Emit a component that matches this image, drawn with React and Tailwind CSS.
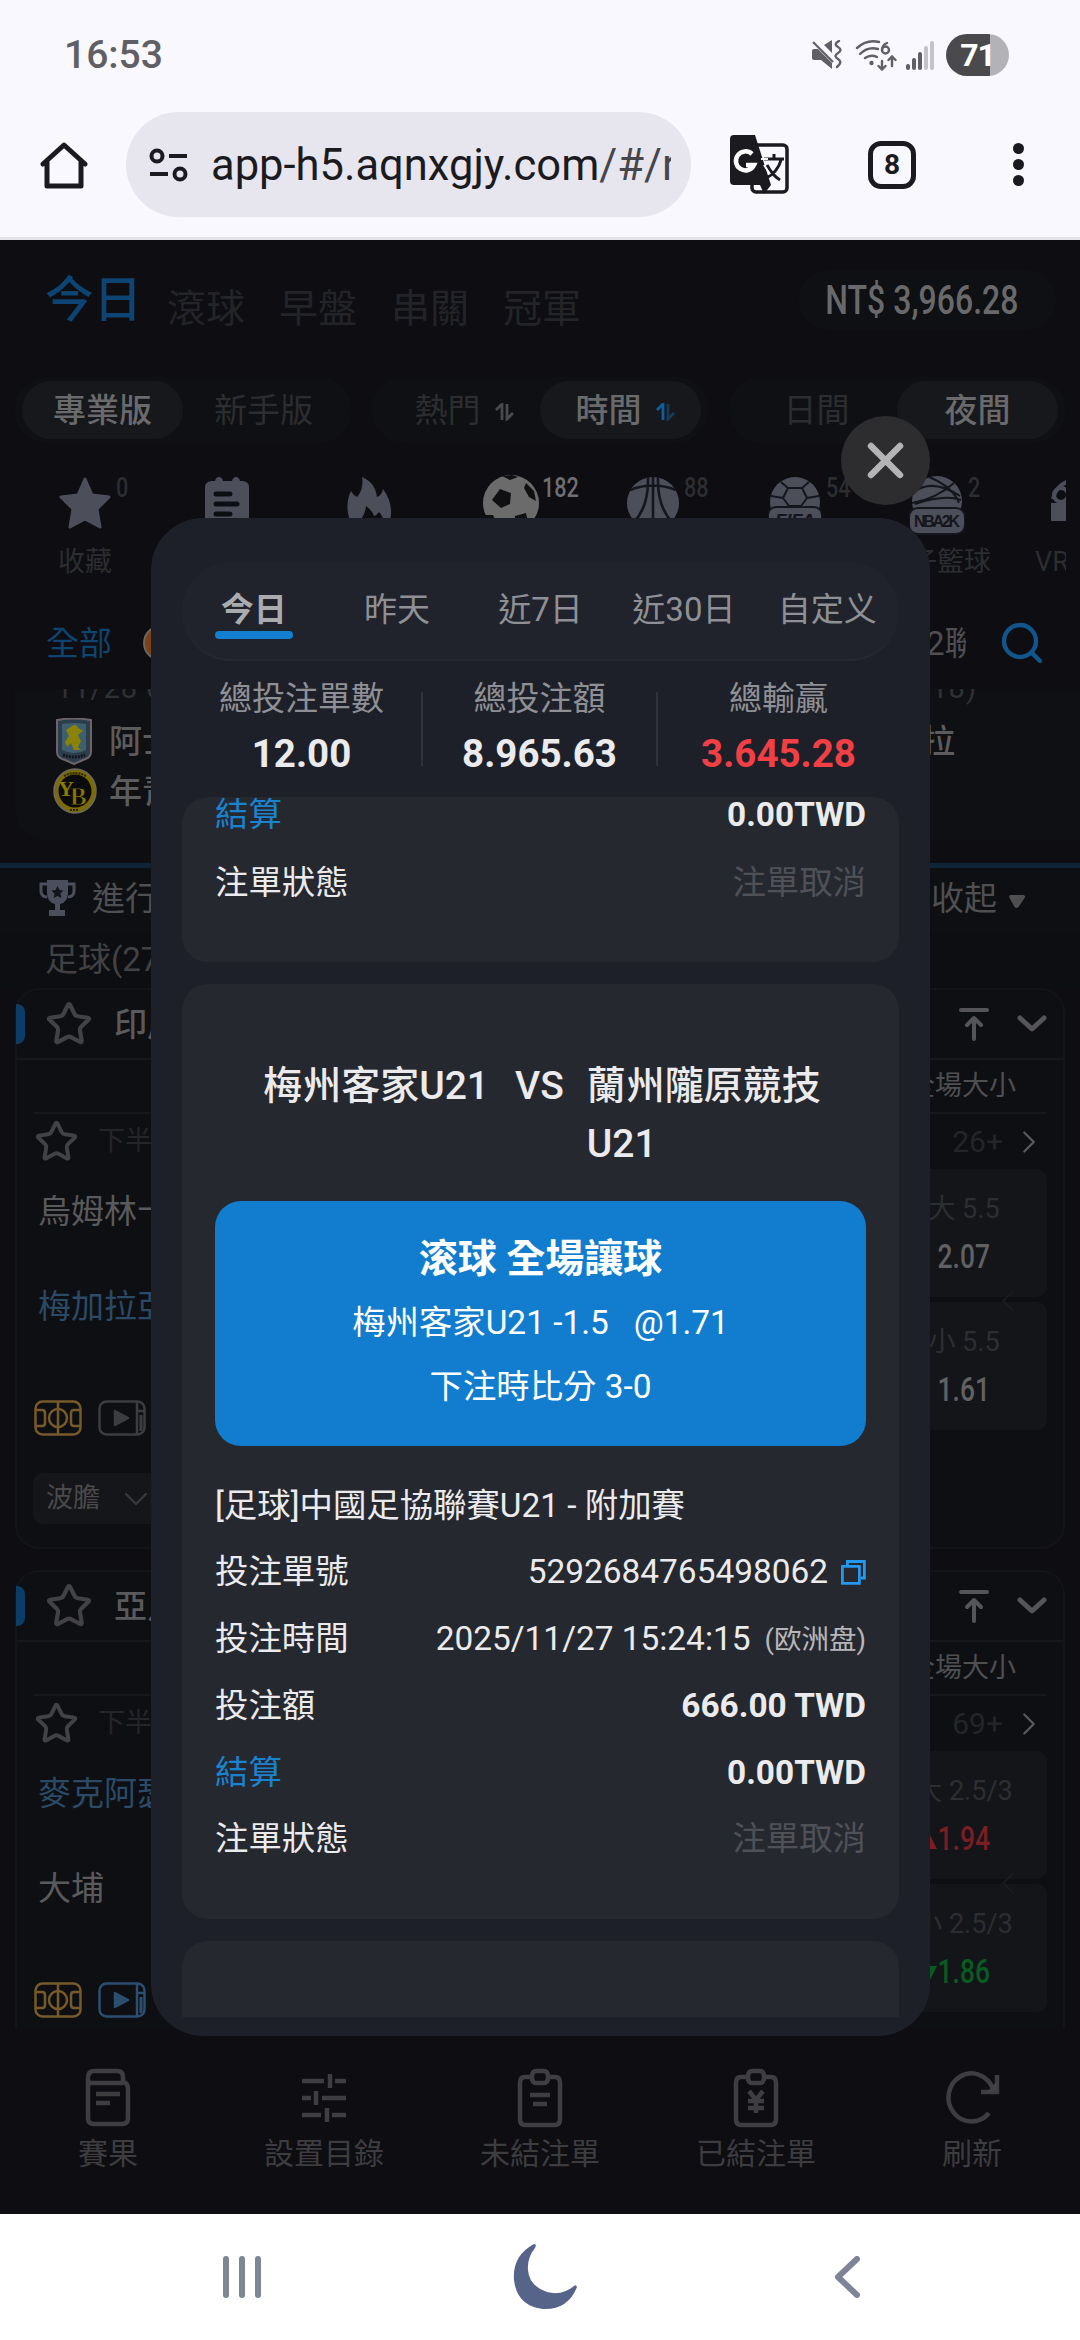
import { Search, Star, ChevronRight, ChevronDown, ChevronLeft } from 'lucide-react';

const FONT = 'font-[Roboto,"Noto_Sans_CJK_TC",sans-serif]';

const records = [
  { label: '投注單號', value: '5292684765498062', kind: 'copy' },
  { label: '投注時間', value: '2025/11/27 15:24:15', kind: 'time' },
  { label: '投注額', value: '666.00 TWD', kind: 'bold' },
  { label: '結算', value: '0.00TWD', kind: 'settle' },
  { label: '注單狀態', value: '注單取消', kind: 'status' },
];

const leagues = [
  {
    name: '印尼',
    more: '26+',
    home: '烏姆林十',
    away: '梅加拉亞',
    homeBlue: false,
    videoOn: false,
    odds: [
      { label: '大 5.5', value: '2.07', trend: '' },
      { label: '小 5.5', value: '1.61', trend: '' },
    ],
  },
  {
    name: '亞足',
    more: '69+',
    home: '麥克阿瑟',
    away: '大埔',
    homeBlue: true,
    videoOn: true,
    odds: [
      { label: '大 2.5/3', value: '1.94', trend: 'up' },
      { label: '小 2.5/3', value: '1.86', trend: 'down' },
    ],
  },
];

function StatusBar() {
  return (
    <div className="flex h-[110px] items-center justify-between pl-[64px] pr-[71px]">
      <span className="text-[39px] leading-none font-medium text-[#606064]">16:53</span>
      <div className="flex items-center">
        <svg width="32" height="30" viewBox="0 0 32 30" fill="#606064">
          <path d="M1 11q0-2 2-2h4l14 14v6l-11-9H3q-2 0-2-2zM13 5l8-5v13z" />
          <path d="M2 2l20 20" stroke="#606064" strokeWidth="2.2" />
          <path
            d="M28 1q-6 3-1 6t0 6q-5 3 0 6t-1 8"
            fill="none"
            stroke="#606064"
            strokeWidth="2.4"
            strokeLinecap="round"
          />
        </svg>
        <svg className="ml-[12px]" width="42" height="31" viewBox="0 0 42 31" fill="none" stroke="#606064" strokeWidth="2.4" strokeLinecap="round">
          <path d="M2 8Q12-1 24 2M5 14Q13 6 23 9M10 18q6-4 12-1" />
          <circle cx="16.500" cy="23" r="1" fill="#606064" />
          <path d="M32 3q-5 2-5 7" />
          <circle cx="30.500" cy="10" r="3.500" />
          <path d="M27 21v8M23.500 26l3.500 3.500 3.500-3.500M37 26v-9M33.500 20l3.500-3.500 3.500 3.500" />
        </svg>
        <div className="ml-[9px] flex h-[29px] items-end gap-[2px]">
          <i className="h-[6px] w-[4px] rounded-full bg-[#606064]" />
          <i className="h-[12px] w-[4px] rounded-full bg-[#606064]" />
          <i className="h-[18px] w-[4px] rounded-full bg-[#606064]" />
          <i className="h-[24px] w-[4px] rounded-full bg-[#c4c3c8]" />
          <i className="h-[29px] w-[4px] rounded-full bg-[#c4c3c8]" />
        </div>
        <div className="ml-[12px] flex h-[42px] w-[63px] items-center justify-center rounded-full bg-[linear-gradient(90deg,#4a4a4d_70%,#b3b2b7_70%)]">
          <span className="text-[32px] leading-none font-bold tracking-[-1px] text-white">71</span>
        </div>
      </div>
    </div>
  );
}

function AddressBar() {
  return (
    <div className="flex h-[109px] items-center">
      <svg className="ml-[40px]" width="48" height="48" viewBox="0 0 48 48" fill="none" stroke="#1b1b1f" strokeWidth="5" strokeLinejoin="round" strokeLinecap="round">
        <path d="M3 23L24 4l21 19M7 21v24h34V21" />
      </svg>
      <div className="ml-[38px] flex h-[105px] w-[565px] items-center rounded-full bg-[#e7e6ee]">
        <svg className="ml-[23px] shrink-0" width="40" height="34" viewBox="0 0 40 34" fill="none" stroke="#1b1b1f" strokeWidth="4">
          <circle cx="8" cy="8" r="5.500" />
          <path d="M20 8h18M1 26h18" />
          <circle cx="31" cy="26" r="5.500" />
        </svg>
        <div className="ml-[22px] w-[460px] overflow-hidden pt-[2px] text-[43.500px] leading-[60px] whitespace-nowrap text-[#1b1b1f]">
          app-h5.aqnxgjy.com<span className="text-[#47464b]">/#/r</span>
        </div>
      </div>
      <svg className="ml-[39px]" width="60" height="60" viewBox="0 0 60 60">
        <rect x="22" y="10" width="35" height="47" rx="4" fill="#f9f8ff" stroke="#1b1b1f" strokeWidth="3.500" />
        <path d="M34 24h20M44 19v5M51 25q-3 12-16 19M37 30q5 10 13 15" stroke="#1b1b1f" strokeWidth="3" fill="none" />
        <path d="M4 0h21l16 50-7 9-4-9H4q-4 0-4-4V4q0-4 4-4z" fill="#1b1b1f" />
        <path d="M22 19a9.500 9.500 0 1 0 2 11h-8" fill="none" stroke="#fff" strokeWidth="4.500" />
        <path d="M31 24h7M34 30l6 9" stroke="#f9f8ff" strokeWidth="2" />
      </svg>
      <div className="ml-[78px] flex h-[48px] w-[48px] items-center justify-center rounded-[13px] border-[5px] border-[#1b1b1f] text-[28px] leading-none font-bold text-[#1b1b1f]">
        8
      </div>
      <div className="ml-[97px] flex flex-col gap-[5px]">
        <i className="size-[11px] rounded-full bg-[#1b1b1f]" />
        <i className="size-[11px] rounded-full bg-[#1b1b1f]" />
        <i className="size-[11px] rounded-full bg-[#1b1b1f]" />
      </div>
    </div>
  );
}

function SwapIcon({ up, down }) {
  return (
    <svg className="mt-[4px]" width="20" height="18" viewBox="0 0 20 18" fill="none" strokeWidth="2.800">
      <path d="M1 7l6-6v16" stroke={up} />
      <path d="M12 1v15l6-6" stroke={down} />
    </svg>
  );
}

function Toggle({ left, right, rightOn, icons }) {
  const on = 'flex h-[58px] w-[161px] items-center justify-center gap-[14px] rounded-full bg-[#17181b] font-medium text-[#6a6a6c]';
  const off = 'flex h-[58px] w-[161px] items-center justify-center gap-[14px] text-[#2c2d30]';
  const shift = icons ? ' pl-[10px]' : '';
  return (
    <div className="flex h-[66px] items-center rounded-full bg-[#0f1013] px-[8px] text-[33px] leading-none">
      <div className={(rightOn ? off : on) + shift}>
        {left}
        {icons && <SwapIcon up="#4a4a4c" down="#4a4a4c" />}
      </div>
      <div className={(rightOn ? on : off) + shift}>
        {right}
        {icons && <SwapIcon up="#0f5f9e" down="#163a58" />}
      </div>
    </div>
  );
}

function Sport({ icon, count, label, bright }) {
  return (
    <div className="relative flex w-[142px] shrink-0 flex-col items-center">
      <div className="flex h-[64px] items-start justify-center">{icon}</div>
      <span
        className={
          'absolute top-[-2px] left-[102px] origin-left scale-x-[0.8] text-[27px] leading-none font-medium ' +
          (bright ? 'text-[#6f6f71]' : 'text-[#2c2d31]')
        }
      >
        {count}
      </span>
      <span className="mt-[8px] text-[27px] leading-none whitespace-nowrap text-[#2c2d30]">{label}</span>
    </div>
  );
}

function SportRow() {
  return (
    <div className="h-[130px] w-[1066px] overflow-hidden pt-[17px]">
      <div className="flex pl-[14px]">
        <Sport
          count="0"
          label="收藏"
          icon={
            <svg width="52" height="52" viewBox="0 0 52 52" fill="#4c4e5a" stroke="#4c4e5a" strokeWidth="3" strokeLinejoin="round">
              <path d="M26 2l7 16 17 2-12 12 3 18-15-8-15 8 3-18L2 20l17-2z" />
            </svg>
          }
        />
        <Sport
          count=""
          label="賽事"
          icon={
            <svg width="44" height="52" viewBox="0 0 44 52">
              <path d="M6 4h4q1-4 4-4t4 4h9q1-4 4-4t4 4h3q6 1 6 6v42H0V10q0-5 6-6z" fill="#4c4e5a" />
              <path d="M11 17h14M11 27h21M11 37h14" stroke="#0d0e13" strokeWidth="5" strokeLinecap="round" />
            </svg>
          }
        />
        <Sport
          count=""
          label="熱門"
          icon={
            <svg width="46" height="52" viewBox="0 0 46 52" fill="#4c4e5a">
              <path d="M16 0q13 5 15 20 5-2 6-8 9 12 8 26-1 8-6 12-1-10-6-15-2 3-5 4-2-6-8-10-1 9-6 14-2 3-3 7-8-5-9-14-2-12 3-22 2 4 6 6 7-8 5-20z" />
            </svg>
          }
        />
        <Sport
          count="182"
          label="足球"
          bright
          icon={
            <svg width="58" height="58" viewBox="0 0 58 58" className="-mt-[2px]">
              <circle cx="29" cy="28" r="28" fill="#6c6b6c" />
              <path
                d="M18 14l11 4-1 11-9 4-9-8zM44 8l8 8 2 10-7-4-5-9zM33 41l11-3 2 9-6 8-8-4zM3 40l8 0 5 12-8-3zM20 1l10-1 6 2-8 3z"
                fill="#101013"
              />
            </svg>
          }
        />
        <Sport
          count="88"
          label="籃球"
          icon={
            <svg width="52" height="52" viewBox="0 0 52 52" fill="none" stroke="#15161d" strokeWidth="2.600">
              <circle cx="26" cy="26" r="26" fill="#4c4e5a" stroke="none" />
              <path d="M26 0v52M3 13q23-9 46 0M6 46Q22 30 21 0M46 46Q30 30 31 0" />
            </svg>
          }
        />
        <Sport
          count="54"
          label="電子足球"
          icon={
            <svg width="54" height="56" viewBox="0 0 54 56" fill="none" stroke="#15161d" strokeWidth="2">
              <circle cx="27" cy="25" r="25" fill="#4c4e5a" stroke="none" />
              <path d="M20 11h14l5 10-6 8H21l-6-8zM20 11l-7-6M34 11l7-6M39 21l12-2M15 21L3 19M33 29l3 8M21 29l-3 8" />
              <rect x="0" y="30" width="54" height="26" rx="8" fill="#4c4e5a" />
              <text x="27" y="50" textAnchor="middle" fill="#15161d" stroke="none" fontSize="19" fontWeight="900" fontStyle="italic" textLength="40" fontFamily="Liberation Sans">
                FIFA
              </text>
            </svg>
          }
        />
        <Sport
          count="2"
          label="電子籃球"
          icon={
            <svg width="56" height="60" viewBox="0 0 56 60" fill="none" stroke="#15161d" strokeWidth="2" className="-mt-[2px]">
              <circle cx="28" cy="26" r="25" fill="#4c4e5a" stroke="none" />
              <path d="M5 17q18-14 46 4M3 28q24-4 42-20M20 2q24 10 30 26M6 29q30-10 46-4" />
              <rect x="0" y="33" width="56" height="26" rx="9" fill="#4c4e5a" />
              <text x="28" y="52" textAnchor="middle" fill="#15161d" stroke="none" fontSize="16" fontWeight="900" textLength="46" fontFamily="Liberation Sans">
                NBA2K
              </text>
            </svg>
          }
        />
        <Sport
          count=""
          label="VR足球"
          icon={
            <svg width="56" height="46" viewBox="0 0 56 46" fill="none" stroke="#4c4e5a" strokeWidth="4">
              <path d="M2 22Q6 4 28 2t26 20" />
              <circle cx="10" cy="18" r="7" />
              <path d="M2 28h52v14H2z" fill="#4c4e5a" />
            </svg>
          }
        />
      </div>
    </div>
  );
}

function AstonCrest() {
  return (
    <svg width="38" height="47" viewBox="0 0 38 47">
      <path d="M2 2q17-3 34 0v32q0 6-8 8l-9 4-9-4q-8-2-8-8z" fill="#2c3d4c" stroke="#6d6469" strokeWidth="2" />
      <path d="M7 6q12-2 24 0v26q-12 6-24 0z" fill="#3f5f6e" />
      <path d="M17 8q5-3 6 2l5 3-5 4 3 6-3 6 3 3h-7l-3-7-4 4-2-5 4-6-3-6z" fill="#8a8308" />
      <path d="M8 37q11 4 22 0" stroke="#11161d" strokeWidth="3" strokeDasharray="2 1" fill="none" />
    </svg>
  );
}

function YoungBoysCrest() {
  return (
    <svg width="44" height="46" viewBox="0 0 44 46">
      <ellipse cx="22" cy="23" rx="21" ry="22" fill="#7b6a06" stroke="#6c6a60" strokeWidth="1.500" />
      <circle cx="22" cy="23" r="16.500" fill="#0b0b0c" />
      <path d="M11 8q11-6 22 0M17 42h9" stroke="#2e2803" strokeWidth="2" strokeDasharray="2 1" fill="none" />
      <text x="5" y="28" fontSize="22" fontWeight="700" fill="#8a7808" fontFamily="Liberation Serif">Y</text>
      <text x="17" y="37" fontSize="25" fontWeight="700" fill="#8a7808" stroke="#0b0b0c" strokeWidth="0.8" fontFamily="Liberation Serif">B</text>
    </svg>
  );
}

function TrophyIcon() {
  return (
    <svg width="37" height="37" viewBox="0 0 37 37">
      <path d="M8 0h21v13q0 9-8 11v6h5v6H10v-6h6v-6q-8-2-8-11z" fill="#4b4e5d" />
      <path d="M8 4H2v8q1 5 6 5M29 4h6v8q-1 5-6 5" fill="none" stroke="#4b4e5d" strokeWidth="3" />
      <path d="M18.500 6l2 4 4 .5-3 3 .8 4.500-3.800-2-3.800 2 .8-4.500-3-3 4-.5z" fill="#14151b" />
    </svg>
  );
}

function PitchIcon() {
  return (
    <svg width="48" height="36" viewBox="0 0 48 36" fill="none" stroke="#775a2b" strokeWidth="2.500">
      <rect x="1.500" y="1.500" width="45" height="33" rx="7" />
      <path d="M24 2v32M2 10h6q3 0 3 3v10q0 3-3 3H2M46 10h-6q-3 0-3 3v10q0 3 3 3h6" />
      <circle cx="24" cy="18" r="9" />
    </svg>
  );
}

function VideoIcon({ color }) {
  return (
    <svg width="48" height="36" viewBox="0 0 48 36" fill="none" stroke={color} strokeWidth="2.500">
      <rect x="1.500" y="1.500" width="45" height="33" rx="7" />
      <path d="M39 2v32M39 11h8" />
      <path d="M43 15v16" strokeWidth="3" />
      <path d="M17 11l13 7-13 7z" fill={color} strokeLinejoin="round" />
    </svg>
  );
}

function OddValue({ value, trend }) {
  const color = trend === 'up' ? 'text-[#7a1e24]' : trend === 'down' ? 'text-[#0b5a22]' : 'text-[#616163]';
  return (
    <span className={'relative mt-[17px] text-[33px] font-medium ' + color}>
      {trend && (
        <svg className="absolute top-[11px] left-[-10px]" width="16" height="16" viewBox="0 0 16 16" fill="currentColor">
          <path d={trend === 'up' ? 'M8 0l8 16H0z' : 'M8 16L0 0h16z'} />
        </svg>
      )}
      <span className="inline-block scale-x-[0.8]">{value}</span>
    </span>
  );
}

function LeagueCard({ league }) {
  return (
    <div className="mx-[15px] h-[561px] shrink-0 rounded-[24px] border-2 border-[#131417] bg-[#0e0f12] leading-none">
      <div className="flex h-[70px] items-center border-b-2 border-[#17181b]">
        <i className="-ml-[1px] h-[40px] w-[9px] rounded-r-[8px] bg-[#0c3d66]" />
        <Star className="ml-[20px]" size={48} strokeWidth={2.1} color="#424245" />
        <span className="ml-[21px] text-[33px] font-medium text-[#5a5a5c]">{league.name}</span>
        <svg className="ml-auto" width="30" height="33" viewBox="0 0 30 33" fill="none" stroke="#545459" strokeWidth="4" strokeLinecap="round" strokeLinejoin="round">
          <path d="M2 2h26M15 31V11M8 17l7-7 7 7" />
        </svg>
        <svg className="mr-[16px] ml-[28px]" width="30" height="20" viewBox="0 0 30 20" fill="none" stroke="#545459" strokeWidth="5" strokeLinecap="round" strokeLinejoin="round">
          <path d="M3 4l12 11L27 4" />
        </svg>
      </div>
      <div className="mr-[17px] ml-[17px] flex h-[54px] items-center justify-end border-b-2 border-[#17181b] pr-[30px] text-[27px] text-[#4f4f52]">
        全場大小
      </div>
      <div className="flex h-[55px] items-center pl-[17px]">
        <Star size={45} strokeWidth={2.1} color="#424245" />
        <span className="ml-[19px] text-[27px] text-[#242528]">下半場</span>
        <span className="ml-auto text-[30px] text-[#242528]">{league.more}</span>
        <ChevronRight className="mr-[15px] ml-[7px]" size={38} strokeWidth={1.4} color="#5a5a5c" />
      </div>
      <div className="flex justify-between pr-[16px]">
        <div className="pl-[21px]">
          <div className={'pt-[26px] text-[33px] ' + (league.homeBlue ? 'text-[#2b4a66]' : 'text-[#5a5a5c]')}>{league.home}</div>
          <div className={'pt-[62px] text-[33px] ' + (league.homeBlue ? 'text-[#5a5a5c]' : 'text-[#2b4a66]')}>{league.away}</div>
          <div className="-ml-[4px] flex gap-[16px] pt-[77px]">
            <PitchIcon />
            <VideoIcon color={league.videoOn ? '#2b4f70' : '#3c3d40'} />
          </div>
          <div className="mt-[37px] -ml-[5px] flex h-[51px] w-[300px] items-center rounded-[10px] bg-[#15161a] pl-[13px] text-[27px] text-[#4a4a4c]">
            波膽
            <ChevronDown className="ml-[16px]" size={40} strokeWidth={1.2} color="#3a3b3e" />
          </div>
        </div>
        <div className="relative flex flex-col gap-[5px]">
          {league.odds.map((odd) => (
            <div key={odd.label} className="flex h-[128px] w-[168px] flex-col items-center rounded-[10px] bg-[#141519] pt-[27px] pl-[2px]">
              <span className="text-[27px] whitespace-nowrap text-[#2d2e31]">{odd.label}</span>
              <OddValue value={odd.value} trend={odd.trend} />
            </div>
          ))}
          <ChevronLeft className="absolute top-[113px] left-[110px]" size={38} strokeWidth={1.2} color="#1b1c1f" />
        </div>
      </div>
    </div>
  );
}

function BottomTabs() {
  const tabs = [
    [
      '賽果',
      <path key="a" d="M38 12V8q0-6-6-6H9Q3 2 3 9v40q0 6 6 6h28q6 0 6-6V20q0-6-5-7M3 14h35M11 25h24M11 34h14" />,
    ],
    [
      '設置目錄',
      <path key="b" d="M1 12h22M34 12h11M29 5v14M1 29h9M21 29h24M15 22v14M1 46h19M31 46h14M26 39v14" />,
    ],
    [
      '未結注單',
      <path key="c" d="M15 8H8q-5 0-5 6v36q0 6 5 6h30q5 0 5-6V14q0-6-5-6h-7M19 2h8q4 0 4 6t-4 6h-8q-4 0-4-6t4-6zM13 26h20M16 35h14" />,
    ],
    [
      '已結注單',
      <path key="d" d="M15 8H8q-5 0-5 6v36q0 6 5 6h30q5 0 5-6V14q0-6-5-6h-7M19 2h8q4 0 4 6t-4 6h-8q-4 0-4-6t4-6zM16 22l7 9 7-9M23 31v13M15 32h16M15 39h16" />,
    ],
    [
      '刷新',
      <g key="e">
        <path d="M40 44A23 24 0 1 1 44 20" />
        <path d="M48 6v17H32" />
        <path d="M48 12v11H38z" fill="#434346" stroke="none" />
      </g>,
    ],
  ];
  return (
    <div className="absolute inset-x-0 bottom-0 grid h-[186px] grid-cols-5 bg-[#0d0d12] pt-[41px] leading-none">
      {tabs.map(([label, drawing]) => (
        <div key={label} className="flex flex-col items-center">
          <svg width="46" height="58" viewBox="0 0 46 58" fill="none" stroke="#3e3e41" strokeWidth="4.500" className="overflow-visible">
            {drawing}
          </svg>
          <span className="mt-[12px] text-[30px] text-[#3d3d40]">{label}</span>
        </div>
      ))}
    </div>
  );
}

function Backdrop() {
  return (
    <div className="flex h-full flex-col bg-[#0d0d12]">
      <div className="flex h-[120px] shrink-0 items-center pl-[45px] leading-none text-[#232427]">
        <span className="pt-[3px] text-[48.500px] font-medium text-[#0d4472]">今日</span>
        <div className="ml-[25px] flex gap-[34px] pt-[19px] text-[39px]">
          <span>滾球</span>
          <span>早盤</span>
          <span>串關</span>
          <span>冠軍</span>
        </div>
        <div className="mr-[24px] ml-auto flex h-[60px] w-[258px] items-center justify-center rounded-full bg-[#0f1013]">
          <span className="scale-x-[0.8] pt-[2px] pr-[12px] text-[40px] font-medium whitespace-nowrap text-[#69696b]">NT$ 3,966.28</span>
        </div>
      </div>
      <div className="flex h-[100px] shrink-0 items-center gap-[19px] pl-[14px]">
        <Toggle left="專業版" right="新手版" />
        <Toggle left="熱門" right="時間" rightOn icons />
        <Toggle left="日間" right="夜間" rightOn />
      </div>
      <SportRow />
      <div className="flex h-[99px] shrink-0 items-center pt-[7px] pl-[46px] text-[33px] leading-none">
        <span className="text-[#0f446e]">全部</span>
        <i className="ml-[31px] size-[36px] rounded-full border-2 border-[#6b6462] bg-[#7a4317]" />
        <div className="ml-auto flex w-[40px] justify-start overflow-hidden whitespace-nowrap text-[#4f4f52]">2聯賽</div>
        <Search className="mr-[34px] ml-[32px]" size={48} strokeWidth={2.2} color="#11558a" />
      </div>
      <div className="ml-[15px] h-[151px] shrink-0 overflow-hidden rounded-bl-[30px] bg-[#0f1013] leading-none">
        <div className="-mt-[16px] flex h-[30px] items-center pl-[41px] text-[29px] tracking-[1px] text-[#303134]">
          11/28 04:00
          <span className="mr-[103px] ml-auto">(118)</span>
        </div>
        <div className="mt-[15px] flex items-center pl-[40px] text-[33px] font-medium text-[#5c5c5e]">
          <AstonCrest />
          <span className="ml-[16px]">阿士東</span>
          <span className="mr-[125px] ml-auto">維拉</span>
        </div>
        <div className="mt-[3px] flex items-center pl-[38px] text-[33px] font-medium text-[#5c5c5e]">
          <YoungBoysCrest />
          <span className="ml-[12px]">年青人</span>
        </div>
      </div>
      <div className="mt-[23px] flex h-[69px] shrink-0 items-center border-t-[5px] border-[#0e2538] bg-[#0d0f12] pb-[3px] pl-[39px] text-[33px] leading-none text-[#4f4f52]">
        <TrophyIcon />
        <span className="ml-[16px]">進行中</span>
        <span className="ml-auto">收起</span>
        <svg className="mt-[5px] mr-[54px] ml-[11px]" width="18" height="13" viewBox="0 0 17 13" fill="#4f4f52">
          <path d="M2 0h13q3 1 1 3l-6 9q-2 2-4 0L1 3q-1-2 1-3z" />
        </svg>
      </div>
      <div className="flex h-[56px] shrink-0 items-center bg-[#0d0e11] pb-[2px] pl-[45px] text-[33px] leading-none text-[#424245]">足球(27)</div>
      <div className="flex flex-col gap-[21px] overflow-hidden">
        {leagues.map((league) => (
          <LeagueCard key={league.name} league={league} />
        ))}
      </div>
    </div>
  );
}

function RecordRow({ label, value, kind }) {
  return (
    <div className="flex h-[66.75px] items-center justify-between pt-[2px]">
      <span className={kind === 'settle' ? 'text-[#1b82cd]' : ''}>{label}</span>
      {kind === 'copy' && (
        <span className="flex items-center">
          {value}
          <svg className="ml-[13px]" width="25" height="25" viewBox="0 0 25 25" fill="none" stroke="#2497ee" strokeWidth="2.800">
            <path d="M1.400 6.400h17v17h-17z" />
            <path d="M6.400 5V1.500h17V18H20" />
          </svg>
        </span>
      )}
      {kind === 'time' && (
        <span className="flex items-center">
          {value}
          <span className="ml-[14px] pt-[2px] text-[27.500px] text-[#b6b6b9]">(欧洲盘)</span>
        </span>
      )}
      {(kind === 'bold' || kind === 'settle') && <span className="font-bold">{value}</span>}
      {kind === 'status' && <span className="text-[#4f5157]">{value}</span>}
    </div>
  );
}

function RecordsDialog() {
  const ranges = ['今日', '昨天', '近7日', '近30日', '自定义'];
  const totals = [
    ['總投注單數', '12.00'],
    ['總投注額', '8.965.63'],
    ['總輸贏', '3.645.28'],
  ];
  return (
    <div className="absolute top-[278px] left-[151px] h-[1518px] w-[779px] rounded-[52px] bg-[#1e2029] px-[31px] pt-[44px] text-[33.400px] leading-none text-[#ebebed]">
      <button className="absolute -top-[102px] right-0 flex size-[89px] items-center justify-center rounded-full bg-[#2d2d30]">
        <svg width="37" height="37" viewBox="0 0 37 37" stroke="#b4b4b6" strokeWidth="6.500" strokeLinecap="round">
          <path d="M4 4l29 29M33 4L4 33" />
        </svg>
      </button>
      <div className="grid h-[99px] grid-cols-5 rounded-full border-b-2 border-[#262932] bg-[#20232b] text-[33px] text-[#8f9095]">
        {ranges.map((range, i) => (
          <div key={range} className={'relative flex items-center justify-center pb-[2px] whitespace-nowrap ' + (i === 0 ? 'font-bold text-[#aaabae]' : '')}>
            {range}
            {i === 0 && <i className="absolute bottom-[20px] left-1/2 h-[8px] w-[78px] -translate-x-1/2 rounded-full bg-[#127fd0]" />}
          </div>
        ))}
      </div>
      <div className="grid h-[136px] grid-cols-[241px_235px_241px] items-start">
        {totals.map(([label, value], i) => (
          <div key={label} className={'mt-[31px] h-[74px] ' + (i === 2 ? '' : 'border-r-2 border-[#30323a]')}>
            <div className="-mt-[10px] text-center text-[33px] whitespace-nowrap text-[#8f9095]">{label}</div>
            <div className={'mt-[20px] text-center text-[38.500px] font-bold ' + (i === 2 ? 'text-[#f04045]' : '')}>{value}</div>
          </div>
        ))}
      </div>
      <div className="flex h-[1220px] flex-col gap-[22px] overflow-hidden rounded-t-[26px]">
        <div className="h-[165px] shrink-0 rounded-[26px] bg-[#26282f] px-[33px]">
          <div className="flex h-[36px] items-center justify-between">
            <span className="text-[#1b82cd]">結算</span>
            <span className="font-bold">0.00TWD</span>
          </div>
          <div className="h-[15px]" />
          <RecordRow label="注單狀態" value="注單取消" kind="status" />
        </div>
        <div className="h-[935px] shrink-0 rounded-[26px] bg-[#26282f] px-[33px] pt-[73px]">
          <div className="flex justify-center pl-[5px] text-[39px] leading-[58px] font-medium">
            <span className="whitespace-nowrap">梅州客家U21</span>
            <span className="ml-[26px]">VS</span>
            <span className="ml-[23px] w-[236px]">蘭州隴原競技U21</span>
          </div>
          <div className="mt-[28px] h-[245px] rounded-[26px] bg-[#127dce] pt-[26px] text-center leading-[64px] text-white">
            <div className="text-[39px] font-bold">滚球 全場讓球</div>
            <div>
              梅州客家U21 -1.5<span className="ml-[25px]">@1.71</span>
            </div>
            <div>下注時比分 3-0</div>
          </div>
          <div className="mt-[25px] flex h-[66.75px] items-center pt-[2px]">[足球]中國足協聯賽U21 - 附加賽</div>
          {records.map((record) => (
            <RecordRow key={record.label} {...record} />
          ))}
        </div>
        <div className="h-[935px] shrink-0 rounded-[26px] bg-[#26282f]" />
      </div>
    </div>
  );
}

function SystemNav() {
  return (
    <div className="flex h-[126px] items-center bg-white">
      <div className="ml-[223px] flex gap-[10px]">
        <i className="h-[42px] w-[6px] rounded-full bg-[#7b8792]" />
        <i className="h-[42px] w-[6px] rounded-full bg-[#7b8792]" />
        <i className="h-[42px] w-[6px] rounded-full bg-[#7b8792]" />
      </div>
      <svg className="ml-[252px]" width="65" height="66" viewBox="0 0 65 66" fill="#576489">
        <path d="M21 0Q-1 12 1 36q3 26 29 29 25 1 34-22-1-3-3-1-12 10-27 6Q16 42 15 26q-1-12 7-22 2-4-1-4z" />
      </svg>
      <svg className="ml-[256px]" width="27" height="42" viewBox="0 0 27 42" fill="none" stroke="#7f8397" strokeWidth="6" strokeLinecap="round" strokeLinejoin="round">
        <path d="M23 3L4 21l19 18" />
      </svg>
    </div>
  );
}

export default function App() {
  return (
    <div className={FONT + ' h-[2340px] w-[1080px] overflow-hidden bg-white'}>
      <header className="h-[240px] border-b-[3px] border-[#e2e1e7] bg-[#f9f8ff]">
        <StatusBar />
        <AddressBar />
      </header>
      <main className="relative h-[1974px] overflow-hidden">
        <Backdrop />
        <BottomTabs />
        <RecordsDialog />
      </main>
      <SystemNav />
    </div>
  );
}
